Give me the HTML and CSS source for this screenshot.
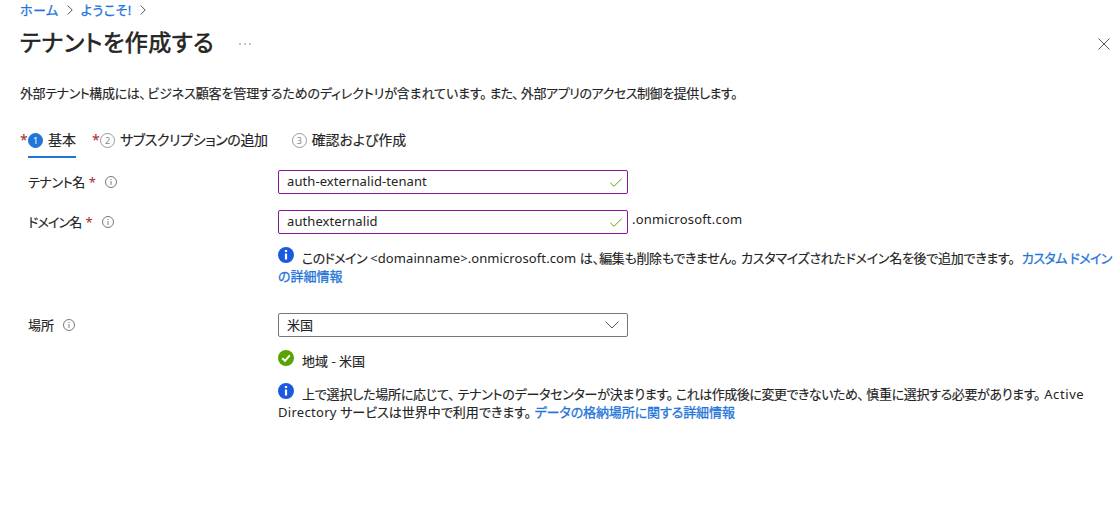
FILE: index.html
```html
<!DOCTYPE html>
<html lang="ja">
<head>
<meta charset="utf-8">
<title>テナントを作成する</title>
<link rel="stylesheet" href="styles.css">
</head>
<body>
<main class="blade">
  <nav class="crumbs">
    <a>ホーム</a>
    <svg class="sep" viewBox="0 0 6 10"><path d="M.7.5 5.2 5 .7 9.5"/></svg>
    <a>ようこそ!</a>
    <svg class="sep" viewBox="0 0 6 10"><path d="M.7.5 5.2 5 .7 9.5"/></svg>
  </nav>
  <header class="head">
    <h1>テナントを作成する</h1>
    <svg class="more" viewBox="0 0 12 2"><path d="M.3 1h1.4M5.3 1h1.4M10.3 1h1.4"/></svg>
    <svg class="close" viewBox="0 0 12 12"><path d="M.4.4l11.2 11.2M11.6.4.4 11.6"/></svg>
  </header>
  <p class="lead"><span class="lead-a">外部テナント構成には、</span><span class="lead-b">ビジネス顧客を管理するためのディレクトリが含まれています。</span><span class="lead-c">また、</span><span class="lead-d">外部アプリのアクセス制御を提供します。</span></p>

  <div class="tabs">
    <span class="star">*</span>
    <div class="tab active"><i class="num">1</i><span>基本</span></div>
    <span class="star second">*</span>
    <div class="tab"><i class="num">2</i><span class="tab-sub">サブスクリプションの追加</span></div>
    <div class="tab third"><i class="num">3</i><span class="tab-review">確認および作成</span></div>
  </div>

  <div class="form">
    <div class="row">
      <label><span class="name-tenant">テナント名</span><b>*</b><svg class="hint" viewBox="0 0 12 12"><circle cx="6" cy="6" r="5.5"/><path d="M6 5.1v3.8M6 3v1"/></svg></label>
      <div class="field"><span class="latin value">auth-externalid-tenant</span><svg class="tick" viewBox="0 0 12 9"><path d="M.4 4.8 4 8.3 11.7.6"/></svg></div>
    </div>
    <div class="row domain">
      <label><span class="name-domain">ドメイン名</span><b>*</b><svg class="hint" viewBox="0 0 12 12"><circle cx="6" cy="6" r="5.5"/><path d="M6 5.1v3.8M6 3v1"/></svg></label>
      <div class="field"><span class="latin value">authexternalid</span><svg class="tick" viewBox="0 0 12 9"><path d="M.4 4.8 4 8.3 11.7.6"/></svg></div>
      <span class="latin suffix">.onmicrosoft.com</span>
    </div>
    <div class="note first">
      <div><svg class="badge info" viewBox="0 0 16 16"><circle cx="8" cy="8" r="8"/><path d="M8 6.5v6M8 3v2"/></svg><span class="n1a">このドメイン</span> <span class="latin">&lt;domainname&gt;.onmicrosoft.com</span> <span class="n1b">は、</span><span class="n1c">編集も削除もできません。</span><span class="n1d">カスタマイズされたドメイン名を後で追加できます。</span> <a class="n1e">カスタム ドメイン</a></div>
      <div><a class="n1f">の詳細情報</a></div>
    </div>
    <div class="row place">
      <label><span>場所</span><svg class="hint" viewBox="0 0 12 12"><circle cx="6" cy="6" r="5.5"/><path d="M6 5.1v3.8M6 3v1"/></svg></label>
      <div class="field select"><span>米国</span><svg class="chev" viewBox="0 0 14 8"><path d="M.6.7 7 7 13.4.7"/></svg></div>
    </div>
    <div class="note region"><div><svg class="badge ok" viewBox="0 0 16 16"><circle cx="8" cy="8" r="8"/><path d="M4.2 8.2 7 10.8l4.8-5.4"/></svg><span>地域 - 米国</span></div></div>
    <div class="note last">
      <div><svg class="badge info" viewBox="0 0 16 16"><circle cx="8" cy="8" r="8"/><path d="M8 6.5v6M8 3v2"/></svg><span class="n2a">上で選択した場所に応じて、</span><span class="n2b">テナントのデータセンターが決まります。</span><span class="n2c">これは作成後に変更できないため、</span><span class="n2d">慎重に選択する必要があります。</span><span class="n2e">Active</span></div>
      <div><span class="n2f">Directory</span> <span class="n2g">サービスは世界中で利用できます。</span> <a class="n2h">データの格納場所に関する詳細情報</a></div>
    </div>
  </div>
</main>
</body>
</html>
```
FILE: styles.css
```css
* { box-sizing: border-box; }
body { margin: 0; background: #fff; color: #242424; font: 13px/18px "Noto Sans", "Noto Sans CJK JP", sans-serif; font-feature-settings: "palt"; -webkit-text-stroke: .15px currentColor; }
svg { fill: none; stroke: #555; flex: none; }
a { color: #1f75d8; -webkit-text-stroke: .3px currentColor; }
.blade { height: 523px; overflow: hidden; padding-left: 20px; white-space: nowrap; }
.latin { letter-spacing: .09px; -webkit-text-stroke: 0; }
.crumbs { display: flex; align-items: center; height: 20px; gap: 8px; letter-spacing: .5px; }
.sep { width: 6px; height: 10px; }
.head { display: flex; align-items: center; height: 46px; padding-right: 9px; }
h1 { margin: 0; width: 219px; font-size: 23px; line-height: 44px; height: 46px; font-weight: 400; letter-spacing: .5px; -webkit-text-stroke: .6px currentColor; }
.more { width: 12px; height: 2px; margin-top: 2px; }
.close { width: 12px; height: 12px; margin: 2px 0 0 auto; }
.lead { margin: 17px 0 0; height: 20px; line-height: 20px; }
.lead-a { margin-right: 2px; letter-spacing: -.4px; }
.lead-b { margin-right: 3px; letter-spacing: -.12px; }
.lead-c { margin-right: 3px; letter-spacing: -.9px; }
.lead-d { letter-spacing: -.42px; }
.tabs { display: flex; height: 36px; margin-top: 19px; font-size: 14px; }
.star { width: 8px; line-height: 36px; color: #a4262c; -webkit-text-stroke: 0; }
.second { margin-left: 16px; }
.tab { display: flex; align-items: center; gap: 5px; height: 36px; }
.active { border-bottom: 2px solid #1f75d8; padding-top: 2px; width: 48px; }
.num { flex: none; width: 15px; height: 15px; border: 1px solid #999; border-radius: 50%; font: 9px/13px "Noto Sans", sans-serif; text-align: center; color: #888; -webkit-text-stroke: 0; }
.active .num { background: #1f75d8; border-color: #1f75d8; color: #fff; }
.tab-sub { letter-spacing: -.38px; }
.third { margin-left: 24px; }
.tab-review { letter-spacing: -.1px; }
.form { padding: 12px 0 0 8px; }
.row { display: flex; height: 24px; }
.row label { display: flex; align-items: center; width: 250px; }
.name-tenant { letter-spacing: -.4px; }
.name-domain { letter-spacing: -.85px; }
label b { margin-left: 4px; font-weight: 400; color: #a4262c; -webkit-text-stroke: 0; }
.hint { width: 12px; height: 12px; margin-left: 9px; stroke-width: .8; }
.field { display: flex; align-items: center; justify-content: space-between; width: 350px; height: 24px; padding: 0 5px 0 8px; border: 1px solid #881798; border-radius: 2px; }
.value { padding-bottom: 2px; }
.tick { width: 12px; height: 9px; stroke: #57a300; }
.domain { margin-top: 16px; }
.suffix { margin-left: 4px; letter-spacing: .2px; }
.select { border-color: #777; padding-right: 8px; }
.chev { width: 14px; height: 8px; }
.note { margin-left: 250px; }
.first { margin-top: 15px; }
.note div { height: 18px; }
.badge { width: 16px; height: 16px; margin: -4px 8px 0 0; vertical-align: 0; }
.info circle { fill: #1b5ae0; stroke: none; }
.info path { stroke: #fff; stroke-width: 2.2; }
.ok circle { fill: #57a300; stroke: none; }
.ok path { stroke: #fff; stroke-width: 2; }
.n1a { letter-spacing: -.6px; }
.n1c { margin-right: 4px; letter-spacing: -.35px; }
.n1d { margin-right: 4px; letter-spacing: -.27px; }
.n1e { letter-spacing: -.6px; }
.n2a { margin-right: 3px; letter-spacing: -.2px; }
.n2b { margin-right: 3px; letter-spacing: -.25px; }
.n2c { margin-right: 3px; letter-spacing: -.48px; }
.n2d { margin-right: 4px; letter-spacing: -.35px; }
.n2e { letter-spacing: .6px; -webkit-text-stroke: 0; }
.n2f { letter-spacing: .3px; -webkit-text-stroke: 0; }
.n2h { letter-spacing: -.1px; }
.place { margin-top: 28px; }
.region { margin-top: 15px; }
.last { margin-top: 15px; }
```
